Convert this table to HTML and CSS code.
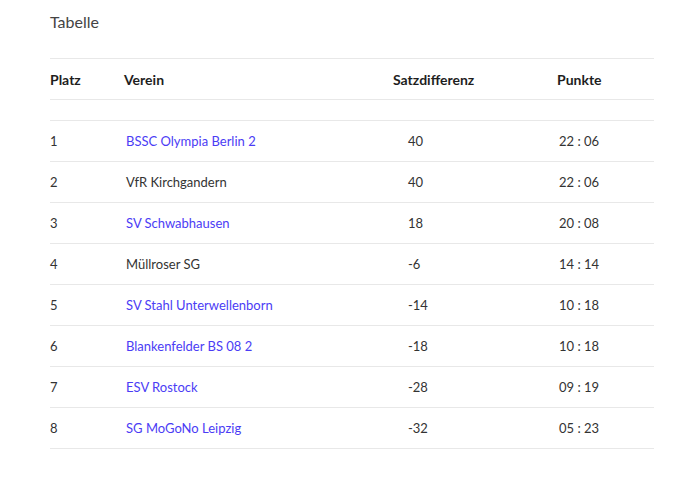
FILE: index.html
```html
<!DOCTYPE html>
<html lang="de">
<head>
<meta charset="utf-8">
<title>Tabelle</title>
<link rel="stylesheet" href="styles.css">
</head>
<body>
<main class="page">
  <h2 class="title">Tabelle</h2>
  <table class="standings">
    <thead>
      <tr>
        <th class="c-place">Platz</th>
        <th class="c-club">Verein</th>
        <th class="c-diff">Satzdifferenz</th>
        <th class="c-pts">Punkte</th>
      </tr>
      <tr class="spacer"><td colspan="4"></td></tr>
    </thead>
    <tbody>
      <tr><td class="c-place">1</td><td class="c-club"><a href="#">BSSC Olympia Berlin 2</a></td><td class="c-diff">40</td><td class="c-pts">22 : 06</td></tr>
      <tr><td class="c-place">2</td><td class="c-club">VfR Kirchgandern</td><td class="c-diff">40</td><td class="c-pts">22 : 06</td></tr>
      <tr><td class="c-place">3</td><td class="c-club"><a href="#">SV Schwabhausen</a></td><td class="c-diff">18</td><td class="c-pts">20 : 08</td></tr>
      <tr><td class="c-place">4</td><td class="c-club">Müllroser SG</td><td class="c-diff">-6</td><td class="c-pts">14 : 14</td></tr>
      <tr><td class="c-place">5</td><td class="c-club"><a href="#">SV Stahl Unterwellenborn</a></td><td class="c-diff">-14</td><td class="c-pts">10 : 18</td></tr>
      <tr><td class="c-place">6</td><td class="c-club"><a href="#">Blankenfelder BS 08 2</a></td><td class="c-diff">-18</td><td class="c-pts">10 : 18</td></tr>
      <tr><td class="c-place">7</td><td class="c-club"><a href="#">ESV Rostock</a></td><td class="c-diff">-28</td><td class="c-pts">09 : 19</td></tr>
      <tr><td class="c-place">8</td><td class="c-club"><a href="#">SG MoGoNo Leipzig</a></td><td class="c-diff">-32</td><td class="c-pts">05 : 23</td></tr>
    </tbody>
  </table>
</main>
</body>
</html>
```

FILE: styles.css
```css
html, body {
  margin: 0;
  padding: 0;
  background: #ffffff;
}
body {
  font-family: Lato, "Open Sans", "Liberation Sans", sans-serif;
  color: #333333;
}
.page {
  padding: 11px 33px 0 50px;
}
.title {
  margin: 0;
  font-size: 16px;
  font-weight: 400;
  line-height: 22px;
  color: #444444;
}
.standings {
  margin-top: 25px;
  width: 604px;
  border-collapse: collapse;
  font-size: 13px;
  table-layout: fixed;
}
.standings th,
.standings td {
  text-align: left;
  padding: 0;
  height: 40px;
  border-top: 1px solid #e8e8e8;
  vertical-align: middle;
}
.standings th {
  font-size: 14px;
  font-weight: 700;
  color: #1e1e1e;
}
.standings tbody tr:last-child td {
  border-bottom: 1px solid #e8e8e8;
}
.standings .spacer td {
  height: 20px;
}
.c-place { width: 74px; }
.c-club { width: 269px; }
.c-diff { width: 164px; }
.c-pts { width: 97px; }
.standings td.c-club,
.standings td.c-pts { padding-left: 2px; }
.standings td.c-diff { padding-left: 15px; }
.standings a {
  color: #4b3cf5;
  text-decoration: none;
}
```
